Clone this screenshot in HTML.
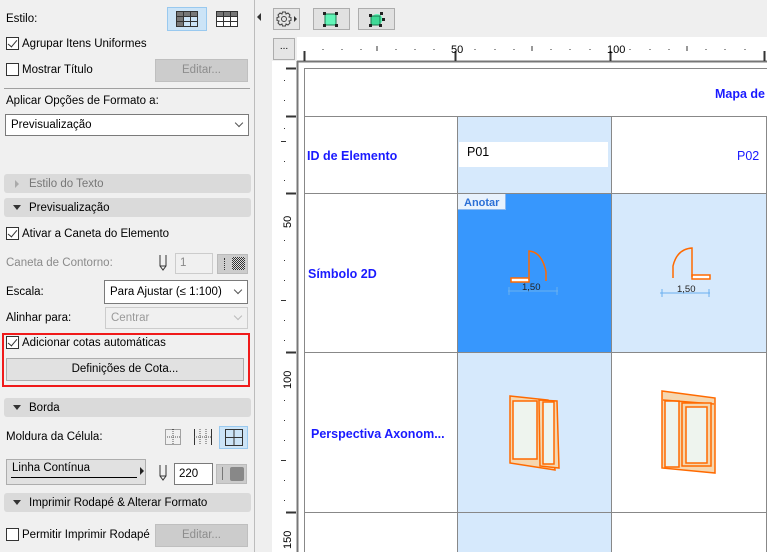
<!DOCTYPE html>
<html><head><meta charset="utf-8"><style>
*{box-sizing:border-box;margin:0;padding:0}
body{width:767px;height:552px;overflow:hidden;background:#f0f0f0;font-family:"Liberation Sans",sans-serif;font-size:11.5px;line-height:15px;color:#000;position:relative}
.a{position:absolute;white-space:nowrap}
.cb{position:absolute;width:13px;height:13px;border:1px solid #333;background:#fff}
.cb.on::after{content:"";position:absolute;left:3px;top:0px;width:4px;height:8px;border:solid #333;border-width:0 1.5px 1.5px 0;transform:rotate(40deg)}
.btn{position:absolute;background:#e1e1e1;border:1px solid #adadad;text-align:center}
.dis{background:#cccccc;border:1px solid #bfbfbf;color:#8d8d8d}
.sel{position:absolute;background:#fff;border:1px solid #7a7a7a;padding-left:5px}
.hdr{position:absolute;left:4px;width:247px;height:19px;background:#dadada;border-radius:3px;line-height:20px;padding-left:25px}
.hdr::before{content:"";position:absolute;left:9px;top:7px;border-left:4px solid transparent;border-right:4px solid transparent;border-top:5px solid #333}
.hdr.closed::before{left:11px;top:6px;border-top:4px solid transparent;border-bottom:4px solid transparent;border-left:4px solid #aaa;border-right:0}
.chev{position:absolute;right:6px;top:5px;width:6px;height:6px;border:solid #555;border-width:0 1px 1px 0;transform:rotate(45deg)}
</style></head><body>
<div class="a" style="left:6px;top:12px">Estilo:</div>
<div class="a" style="left:167px;top:7px;width:40px;height:24px;background:#cce4f7;border:1px solid #99c9ef"></div>
<svg class="a" style="left:176px;top:11px" width="22" height="16"><rect x="0.5" y="0.5" width="21" height="15" fill="#cce4f7" stroke="#333"/><rect x="1" y="1" width="20" height="4" fill="#777"/><rect x="1" y="1" width="6" height="14" fill="#777"/><path d="M0 5.5H22M0 10.5H22M7.5 0V16M14.5 0V16" stroke="#333"/></svg>
<svg class="a" style="left:216px;top:11px" width="22" height="16"><rect x="0.5" y="0.5" width="21" height="15" fill="#fff" stroke="#333"/><rect x="1" y="1" width="20" height="4" fill="#777"/><path d="M0 5.5H22M0 10.5H22M7.5 0V16M14.5 0V16" stroke="#333"/></svg>
<div class="cb on" style="left:6px;top:37px"></div><div class="a" style="left:22px;top:37px">Agrupar Itens Uniformes</div>
<div class="cb" style="left:6px;top:63px"></div><div class="a" style="left:22px;top:63px">Mostrar Título</div>
<div class="btn dis" style="left:155px;top:59px;width:93px;height:23px;line-height:21px">Editar...</div>
<div class="a" style="left:4px;top:88px;width:246px;height:1px;background:#a0a0a0"></div>
<div class="a" style="left:6px;top:94px">Aplicar Opções de Formato a:</div>
<div class="sel" style="left:5px;top:114px;width:244px;height:22px;line-height:20px">Previsualização<span class="chev"></span></div>
<div class="hdr closed" style="top:174px;color:#777">Estilo do Texto</div>
<div class="hdr" style="top:198px">Previsualização</div>
<div class="cb on" style="left:6px;top:227px"></div><div class="a" style="left:22px;top:227px">Ativar a Caneta do Elemento</div>
<div class="a" style="left:6px;top:256px;color:#8a8a8a">Caneta de Contorno:</div>
<svg class="a" style="left:158px;top:254px" width="10" height="18"><path d="M2 1V12L5 16L8 12V1M2 12H8" fill="none" stroke="#333"/></svg>
<div class="a" style="left:175px;top:253px;width:38px;height:21px;border:1px solid #ccc;background:#f0f0f0;color:#888;padding:2px 4px">1</div>
<div class="a" style="left:217px;top:254px;width:31px;height:20px;background:#ccc;border:1px solid #bbb"></div>
<div class="a" style="left:232px;top:257px;width:13px;height:13px;background:repeating-conic-gradient(#333 0 25%,#ddd 0 50%) 0 0/2px 2px"></div>
<div class="a" style="left:224px;top:258px;width:1px;height:12px;border-left:1px dotted #333"></div>
<div class="a" style="left:6px;top:285px">Escala:</div>
<div class="sel" style="left:104px;top:280px;width:144px;height:24px;line-height:22px">Para Ajustar (≤ 1:100)<span class="chev" style="top:6px"></span></div>
<div class="a" style="left:6px;top:311px">Alinhar para:</div>
<div class="sel" style="left:105px;top:307px;width:143px;height:22px;line-height:20px;border-color:#ccc;background:#f0f0f0;color:#999">Centrar<span class="chev" style="border-color:#bbb"></span></div>
<div class="a" style="left:2px;top:333px;width:248px;height:54px;border:2px solid #f01a1a"></div>
<div class="cb on" style="left:6px;top:336px"></div><div class="a" style="left:22px;top:336px">Adicionar cotas automáticas</div>
<div class="btn" style="left:6px;top:358px;width:238px;height:23px;line-height:21px">Definições de Cota...</div>
<div class="hdr" style="top:398px">Borda</div>
<div class="a" style="left:6px;top:430px">Moldura da Célula:</div>
<svg class="a" style="left:165px;top:429px" width="16" height="16"><rect x="0.5" y="0.5" width="15" height="15" fill="none" stroke="#555" stroke-dasharray="1 1"/><path d="M8 0V16M0 8H16" stroke="#555" stroke-dasharray="1 1"/></svg>
<svg class="a" style="left:194px;top:429px" width="18" height="16"><path d="M0.5 0V16M17.5 0V16" stroke="#333"/><path d="M6 0V16M12 0V16M0 8H18" stroke="#555" stroke-dasharray="1 1"/></svg>
<div class="a" style="left:219px;top:426px;width:29px;height:23px;background:#cce4f7;border:1px solid #99c9ef"></div>
<svg class="a" style="left:225px;top:429px" width="18" height="17"><rect x="0.5" y="0.5" width="17" height="16" fill="none" stroke="#333"/><path d="M9 0V17M0 8.5H18" stroke="#333"/></svg>
<div class="btn" style="left:6px;top:459px;width:140px;height:26px;text-align:left;padding:1px 0 0 5px">Linha Contínua</div>
<div class="a" style="left:11px;top:477px;width:126px;height:1px;background:#000"></div>
<div class="a" style="left:140px;top:467px;border-top:4px solid transparent;border-bottom:4px solid transparent;border-left:4px solid #222"></div>
<svg class="a" style="left:158px;top:464px" width="10" height="18"><path d="M2 1V12L5 16L8 12V1M2 12H8" fill="none" stroke="#333"/></svg>
<div class="a" style="left:174px;top:463px;width:39px;height:22px;border:1px solid #7a7a7a;background:#fff;padding:3px 4px">220</div>
<div class="a" style="left:216px;top:464px;width:31px;height:20px;background:#ccc;border:1px solid #bbb"></div>
<div class="a" style="left:222px;top:467px;width:1px;height:13px;background:#777"></div>
<div class="a" style="left:230px;top:467px;width:14px;height:14px;background:#888;border-radius:2px"></div>
<div class="hdr" style="top:493px">Imprimir Rodapé &amp; Alterar Formato</div>
<div class="cb" style="left:6px;top:528px"></div><div class="a" style="left:22px;top:528px">Permitir Imprimir Rodapé</div>
<div class="btn dis" style="left:155px;top:524px;width:93px;height:23px;line-height:21px">Editar...</div>
<div class="a" style="left:254px;top:0;width:1px;height:552px;background:#bcbcbc"></div>
<div class="a" style="left:255px;top:0;width:512px;height:552px;background:#efefef"></div>
<div class="a" style="left:257px;top:13px;border-top:4px solid transparent;border-bottom:4px solid transparent;border-right:4px solid #333"></div>
<div class="btn" style="left:273px;top:8px;width:27px;height:22px;background:#e5e5e5"></div>
<svg class="a" style="left:275px;top:10px" width="24" height="18"><g fill="none" stroke="#444"><circle cx="9" cy="9" r="2.5"/><path d="M7.5 2h3l.5 2 2-1 2 2-1 2 2 .5v3l-2 .5 1 2-2 2-2-1-.5 2h-3l-.5-2-2 1-2-2 1-2-2-.5v-3l2-.5-1-2 2-2 2 1z"/></g><path d="M19 6l3 3-3 3z" fill="#333"/></svg>
<div class="btn" style="left:313px;top:8px;width:37px;height:22px;background:#e1e1e1"></div>
<svg class="a" style="left:323px;top:12px" width="16" height="15"><rect x="2" y="2" width="11" height="11" fill="#62f5b8" stroke="#1a7a50"/><g fill="#222"><rect x="0" y="0" width="3" height="3"/><rect x="12" y="0" width="3" height="3"/><rect x="0" y="12" width="3" height="3"/><rect x="12" y="12" width="3" height="3"/></g></svg>
<div class="btn" style="left:358px;top:8px;width:37px;height:22px;background:#e1e1e1"></div>
<svg class="a" style="left:369px;top:12px" width="16" height="15"><circle cx="8" cy="7.5" r="5.5" fill="#62f5b8"/><rect x="2" y="4" width="9" height="9" fill="#3fd996" stroke="#1a7a50"/><g fill="#222"><rect x="0" y="2" width="3" height="3"/><rect x="11" y="0" width="3" height="3"/><rect x="0" y="12" width="3" height="3"/><rect x="10" y="12" width="3" height="3"/><rect x="13" y="6" width="3" height="3"/></g></svg>
<div class="a" style="left:272px;top:61px;width:25px;height:491px;background:#fff"></div>
<div class="a" style="left:297px;top:37px;width:470px;height:24px;background:#fff"></div>
<div class="btn" style="left:273px;top:38px;width:22px;height:22px;background:#e5e5e5;font-size:10px;line-height:16px">...</div>
<svg class="a" style="left:255px;top:0" width="512" height="552" font-family="Liberation Sans" font-size="11">
<rect x="42" y="61" width="470" height="491" fill="#fff"/>
<rect x="202" y="116" width="154" height="77" fill="#d6e9fc"/>
<rect x="202" y="193" width="154" height="159" fill="#3797fd"/>
<rect x="356" y="193" width="156" height="159" fill="#d6e9fc"/>
<rect x="202" y="352" width="154" height="200" fill="#d6e9fc"/>
<rect x="204" y="142" width="149" height="25" fill="#fff"/>
<rect x="202.5" y="193.5" width="48" height="16" fill="#e8f2fd" stroke="#8ab8f0"/>
<g stroke="#888" stroke-width="1" fill="none">
<path d="M49.5 68V552M49 68.5H512M49 116.5H512M49 193.5H512M49 352.5H512M49 512.5H512M202.5 116V552M356.5 116V552M511.5 116V552"/>
</g>
<path d="M42 61.5H512M42.5 61V552" stroke="#777" stroke-width="2"/>
<g stroke="#333">
<path d="M49.5 51v10M200.5 51v10M355.5 51v10M509.5 51v10" stroke-width="2"/>
<path d="M122 46v5M277 46v5M432 46v5"/>
<path d="M68 49v1M87 49v1M106 49v1M141 49v1M160 49v1M179 49v1M220 49v1M240 49v1M259 49v1M296 49v1M315 49v1M335 49v1M375 49v1M395 49v1M414 49v1M451 49v1M470 49v1M490 49v1"/>
<path d="M31 68.5h10M31 116.5h10M31 193.5h10M31 352.5h10M31 512.5h10" stroke-width="2"/>
<path d="M26 141.5h5M26 300.5h5M26 460.5h5"/>
<path d="M29 80.5h1M29 100.5h1M29 128.5h1M29 161.5h1M29 180.5h1M29 240.5h1M29 260.5h1M29 280.5h1M29 320.5h1M29 340.5h1M29 400.5h1M29 420.5h1M29 440.5h1M29 480.5h1M29 500.5h1M29 532.5h1"/>
</g>
<g fill="#000" font-size="11"><text x="196" y="53">50</text><text x="352" y="53">100</text>
<text transform="translate(36,228) rotate(-90)">50</text><text transform="translate(36,389) rotate(-90)">100</text><text transform="translate(36,549) rotate(-90)">150</text></g>
<g fill="#1a1aff" font-weight="bold" font-size="12.5">
<text x="460" y="98">Mapa de</text><text x="52" y="160">ID de Elemento</text><text x="53" y="278">Símbolo 2D</text><text x="56" y="438">Perspectiva Axonom...</text></g>
<text x="482" y="160" fill="#1a1aff" font-size="12.5">P02</text>
<text x="212" y="156" fill="#000" font-size="12.5">P01</text>
<text x="209" y="206" fill="#2b6fd6" font-weight="bold" font-size="11">Anotar</text>
<g fill="none" stroke="#ff6a00" stroke-width="1.5">
<rect x="256" y="278" width="18" height="4" fill="#fff"/><path d="M274 280V251Q287 252 291 272V281"/>
<rect x="437" y="275" width="18" height="4" fill="#fff"/><path d="M437 277V248Q422 249 418 266V278"/>
</g>
<g stroke="#6ab0f0" stroke-width="1"><path d="M253 291H303M254 287v8M302 287v8M405 293H455M407 289v8M454 289v8"/></g>
<text x="267" y="290" font-size="9.5" fill="#222">1,50</text><text x="422" y="292" font-size="9.5" fill="#222">1,50</text>
<g stroke="#ff6a00" stroke-width="1.5">
<path d="M255 396L293 400L300 470L255 463Z" fill="#f5d7b0"/>
<rect x="258" y="401" width="24" height="58" fill="#eef4ee"/>
<path d="M284 400L302 401L304 468L285 466Z" fill="#f5d7b0"/>
<rect x="288" y="402" width="11" height="62" fill="#eef4ee"/>
<path d="M407 391L460 398V473L407 468Z" fill="#f5d7b0"/>
<rect x="410" y="401" width="14" height="66" fill="#eef4ee"/>
<path d="M408 400L459 404"/>
<rect x="427" y="403" width="29" height="63" fill="#f5d7b0"/>
<rect x="431" y="407" width="21" height="56" fill="#eef4ee"/>
</g>
</svg>
</body></html>
